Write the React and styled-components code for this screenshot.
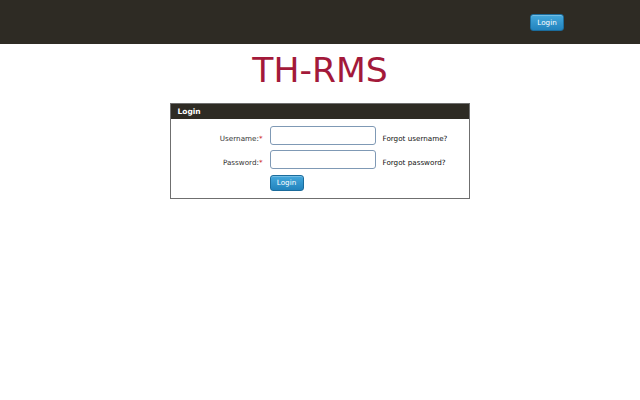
import React from 'react';
import styled, { createGlobalStyle } from 'styled-components';

const GlobalStyle = createGlobalStyle`
  html, body {
    margin: 0;
    padding: 0;
    background: #ffffff;
    font-family: "DejaVu Sans", Verdana, sans-serif;
  }
`;

const TopBar = styled.header`
  height: 44px;
  background: #2e2b24;
  display: flex;
  align-items: flex-start;
  justify-content: flex-end;
  padding: 14px 76px 0 0;
  box-sizing: border-box;
`;

const BlueButton = styled.button`
  height: ${(p) => p.$h || 17}px;
  width: ${(p) => p.$w || 34}px;
  margin-top: ${(p) => p.$mt || 0}px;
  padding: 0;
  border: 1px solid #1b6c9c;
  border-radius: 3px;
  background: linear-gradient(#45a8dc, #2283bd);
  color: #ffffff;
  font-family: "DejaVu Sans", Verdana, sans-serif;
  font-size: 7.2px;
  line-height: 1;
  box-shadow: inset 0 1px 0 rgba(255, 255, 255, 0.25);
  cursor: pointer;
`;

const Main = styled.main`
  display: flex;
  flex-direction: column;
  align-items: center;
`;

const Title = styled.h1`
  margin: 9px 0 16px;
  font-size: 34.6px;
  line-height: 34px;
  height: 34px;
  font-weight: normal;
  color: #a3193a;
`;

const Panel = styled.section`
  width: 300px;
  box-sizing: border-box;
  border: 1px solid #6f6f6f;
  margin-left: -1px;
`;

const PanelHead = styled.div`
  height: 15px;
  background: #2e2b24;
  color: #ffffff;
  font-size: 7.5px;
  font-weight: bold;
  line-height: 15px;
  padding-left: 7px;
`;

const Form = styled.form`
  display: grid;
  grid-template-columns: 92px 106px auto;
  column-gap: 7px;
  row-gap: 5px;
  padding: 7px 0 7px;
  align-items: center;
`;

const Label = styled.label`
  text-align: right;
  font-size: 7.2px;
  color: #333333;
  padding-top: 6px;
`;

const Req = styled.span`
  color: #cc1f1f;
`;

const Field = styled.input`
  height: 19px;
  width: 106px;
  box-sizing: border-box;
  border: 1px solid #7f99b5;
  border-radius: 3px;
  padding: 0 3px;
  font-size: 8px;
  outline: none;
`;

const Hint = styled.a`
  font-size: 7.2px;
  color: #111111;
  text-decoration: none;
  padding-top: 6px;
`;

const Spacer = styled.div``;

export default function App() {
  return (
    <>
      <GlobalStyle />
      <TopBar>
        <BlueButton>Login</BlueButton>
      </TopBar>
      <Main>
        <Title>TH-RMS</Title>
        <Panel>
          <PanelHead>Login</PanelHead>
          <Form onSubmit={(e) => e.preventDefault()}>
            <Label>
              Username:<Req>*</Req>
            </Label>
            <Field type="text" />
            <Hint href="#">Forgot username?</Hint>

            <Label>
              Password:<Req>*</Req>
            </Label>
            <Field type="password" />
            <Hint href="#">Forgot password?</Hint>

            <Spacer />
            <BlueButton $h={16} $mt={1} type="submit">Login</BlueButton>
            <Spacer />
          </Form>
        </Panel>
      </Main>
    </>
  );
}
